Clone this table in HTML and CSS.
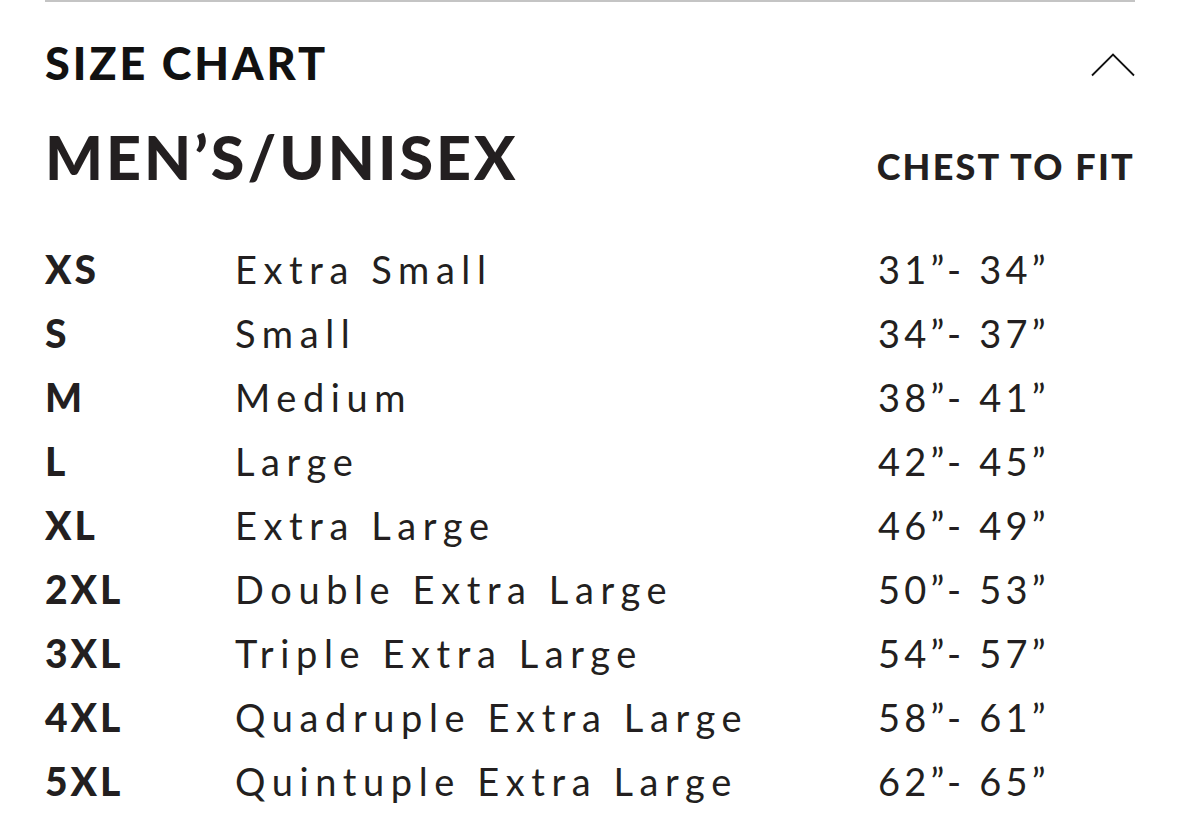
FILE: index.html
```html
<!DOCTYPE html>
<html lang="en">
<head>
<meta charset="utf-8">
<title>Size Chart</title>
<link rel="stylesheet" href="styles.css">
</head>
<body>
<section class="chart">
  <header class="chart-head">
    <h2 class="chart-title">SIZE CHART</h2>
    <svg class="chevron" width="44" height="24" viewBox="0 0 44 24" aria-hidden="true">
      <polyline points="1,22.5 22,1.5 43,22.5" fill="none" stroke="#111" stroke-width="1.8"/>
    </svg>
  </header>
  <div class="group-head">
    <h3 class="group-title">MEN’S/UNISEX</h3>
    <span class="col-label">CHEST TO FIT</span>
  </div>
  <div class="rows">
    <div class="row"><span class="code">XS</span><span class="name">Extra Small</span><span class="range">31”- 34”</span></div>
    <div class="row"><span class="code">S</span><span class="name">Small</span><span class="range">34”- 37”</span></div>
    <div class="row"><span class="code">M</span><span class="name">Medium</span><span class="range">38”- 41”</span></div>
    <div class="row"><span class="code">L</span><span class="name">Large</span><span class="range">42”- 45”</span></div>
    <div class="row"><span class="code">XL</span><span class="name">Extra Large</span><span class="range">46”- 49”</span></div>
    <div class="row"><span class="code">2XL</span><span class="name">Double Extra Large</span><span class="range">50”- 53”</span></div>
    <div class="row"><span class="code">3XL</span><span class="name">Triple Extra Large</span><span class="range">54”- 57”</span></div>
    <div class="row"><span class="code">4XL</span><span class="name">Quadruple Extra Large</span><span class="range">58”- 61”</span></div>
    <div class="row"><span class="code">5XL</span><span class="name">Quintuple Extra Large</span><span class="range">62”- 65”</span></div>
  </div>
</section>
</body>
</html>
```
FILE: styles.css
```css
html, body {
  margin: 0;
  padding: 0;
  background: #ffffff;
}
body {
  font-family: "Lato", "Liberation Sans", sans-serif;
  color: #231f20;
  overflow: hidden;
}
.chart {
  margin: 0 44px 0 45px;
  border-top: 2px solid #c4c4c4;
}
.chart-head {
  display: flex;
  align-items: center;
  justify-content: space-between;
  height: 126px;
  margin-top: -2px;
}
.chart-title {
  margin: 0;
  font-size: 45px;
  font-weight: 900;
  letter-spacing: 2.9px;
  line-height: 1;
  color: #111;
}
.chevron {
  display: block;
  margin-top: 4px;
}
.group-head {
  display: flex;
  align-items: baseline;
  justify-content: space-between;
}
.group-title {
  margin: 0;
  font-size: 61px;
  font-weight: 900;
  letter-spacing: 3px;
  line-height: 1;
}
.col-label {
  font-size: 36px;
  font-weight: 900;
  letter-spacing: 2.2px;
}
.rows {
  margin-top: 49px;
}
.row {
  display: grid;
  grid-template-columns: 190px 643px 1fr;
  height: 64px;
  align-items: center;
  font-size: 38px;
}
.code {
  font-weight: 900;
  font-size: 39px;
  letter-spacing: 3px;
}
.name {
  letter-spacing: 6.6px;
}
.range {
  letter-spacing: 4.2px;
}
```
